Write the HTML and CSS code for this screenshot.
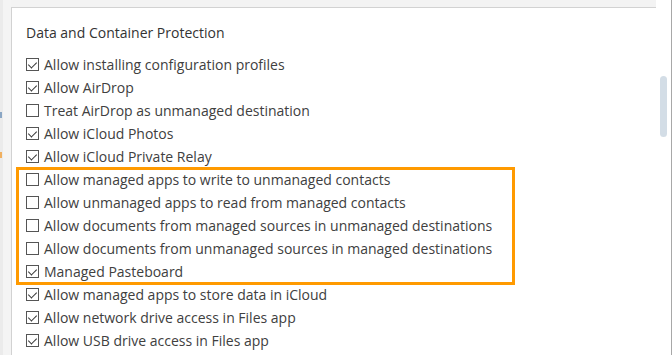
FILE: index.html
```html
<!DOCTYPE html>
<html lang="en">
<head>
  <meta charset="UTF-8" />
  <title>Data and Container Protection</title>
  <link rel="stylesheet" href="styles.css">
</head>
<body>
  <div class="app">
    <div class="side">
      <span class="mark blue"></span>
      <span class="mark orange"></span>
    </div>
    <div class="main">
      <div class="panel">
        <h2 class="title">Data and Container Protection</h2>
        <ul class="options">
          <li><span class="box on"></span>Allow installing configuration profiles</li>
          <li><span class="box on"></span>Allow AirDrop</li>
          <li><span class="box"></span>Treat AirDrop as unmanaged destination</li>
          <li><span class="box on"></span>Allow iCloud Photos</li>
          <li><span class="box on"></span>Allow iCloud Private Relay</li>
          <li><span class="box"></span>Allow managed apps to write to unmanaged contacts</li>
          <li><span class="box"></span>Allow unmanaged apps to read from managed contacts</li>
          <li><span class="box"></span>Allow documents from managed sources in unmanaged destinations</li>
          <li><span class="box"></span>Allow documents from unmanaged sources in managed destinations</li>
          <li><span class="box on"></span>Managed Pasteboard</li>
          <li><span class="box on"></span>Allow managed apps to store data in iCloud</li>
          <li><span class="box on"></span>Allow network drive access in Files app</li>
          <li><span class="box on"></span>Allow USB drive access in Files app</li>
        </ul>
        <div class="highlight"></div>
      </div>
    </div>
    <div class="scroll">
      <div class="thumb"></div>
    </div>
  </div>
</body>
</html>
```

FILE: styles.css
```css
* {
  box-sizing: border-box;
}

body {
  margin: 0;
  height: 355px;
  overflow: hidden;
  font-family: 'Open Sans', 'Liberation Sans', sans-serif;
  color: #333;
  background: #f3f3f3;
}

.app {
  display: flex;
  height: 355px;
}

.side {
  position: relative;
  width: 11px;
  border-left: 3px solid #ebebeb;
  background: #f4f4f4;
}

.mark {
  position: absolute;
  left: -3px;
  width: 2px;
  height: 6px;
}

.mark.blue {
  top: 112px;
  background: #8aa6c4;
}

.mark.orange {
  top: 152px;
  background: #f0b060;
}

.main {
  flex: 1;
  padding-top: 7px;
  background: #f3f3f3;
}

.panel {
  position: relative;
  height: 100%;
  background: #fff;
  border: 1px solid #d2d2d2;
  border-right: none;
  border-bottom: none;
  padding: 15px 0 0 14px;
}

.title {
  margin: 0 0 10px;
  font-size: 14px;
  font-weight: 400;
  color: #333;
  line-height: 20px;
}

.options {
  list-style: none;
  margin: 0;
  padding: 0;
}

.options li {
  display: flex;
  align-items: center;
  height: 23px;
  font-size: 14px;
  color: #404040;
}

.box {
  width: 13px;
  height: 13px;
  margin-right: 5px;
  border: 1px solid #555;
  flex-shrink: 0;
  position: relative;
}

.box.on::after {
  content: "";
  position: absolute;
  left: 3px;
  top: 1px;
  width: 4px;
  height: 7px;
  border: solid #333;
  border-width: 0 1.5px 1.5px 0;
  transform: rotate(45deg);
}

.highlight {
  position: absolute;
  left: 4px;
  top: 159px;
  width: 499px;
  height: 118px;
  border: 3px solid #ff9a00;
}

.scroll {
  width: 16px;
  background: #fff;
  border-right: 1px solid #a8a8a8;
  padding: 76px 0 0 4px;
}

.thumb {
  width: 7px;
  height: 61px;
  border-radius: 4px;
  background: #d3dde6;
}
```
